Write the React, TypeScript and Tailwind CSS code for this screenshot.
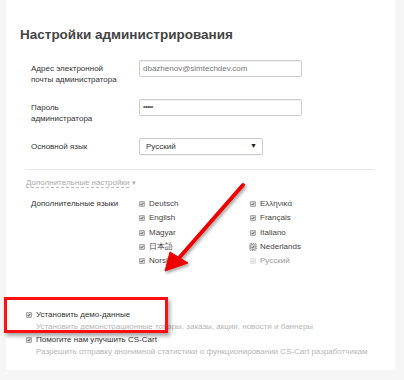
import type { ReactNode } from 'react'

const font = { fontFamily: '"Liberation Sans", Arial, sans-serif' }

const languages = [
  ['Deutsch', 'Ελληνικά'],
  ['English', 'Français'],
  ['Magyar', 'Italiano'],
  ['日本語', 'Nederlands'],
  ['Norsk', 'Русский'],
]

function Check({ disabled = false, focused = false }: { disabled?: boolean; focused?: boolean }) {
  return (
    <span
      className={`relative inline-flex w-[6px] h-[6px] shrink-0 items-center justify-center rounded-[1px] border ${
        disabled ? 'border-[#e2e2e2] bg-[#f3f3f3]' : 'border-[#aaa] bg-[#d4d4d4]'
      } ${focused ? 'outline outline-1 outline-dotted outline-[#888] outline-offset-0' : ''}`}
    >
      <svg viewBox="0 0 6 6" className="w-[6px] h-[6px]">
        <path d="M1 3.2 L2.4 4.6 L5 1.3" fill="none" stroke={disabled ? '#bbb' : '#333'} strokeWidth="1.1" />
      </svg>
    </span>
  )
}

function Row({ label, children, className }: { label: ReactNode; children: ReactNode; className: string }) {
  return (
    <div className={`flex items-start pl-[25px] ${className}`}>
      <div className="w-[108px] pt-[3px] text-[8px] leading-[11px] text-[#333]">{label}</div>
      {children}
    </div>
  )
}

export default function App() {
  return (
    <div className="relative w-[404px] h-[380px] bg-[#f6f6f6] overflow-hidden" style={font}>
      <div className="ml-[6px] w-[389px] h-[370px] bg-white">
        <h1 className="pl-[14px] pt-[26px] text-[13.5px] leading-[18px] font-bold text-[#444]">
          Настройки администрирования
        </h1>

        <Row className="mt-[16px] h-[39px]" label={<>Адрес электронной<br />почты администратора</>}>
          <div className="w-[163px] h-[17px] border border-[#ccc] rounded-[2px] shadow-[inset_0_1px_1px_rgba(0,0,0,0.06)] px-[3px] text-[8px] leading-[15px] text-[#777]">
            dbazhenov@simtechdev.com
          </div>
        </Row>

        <Row className="h-[39px]" label={<>Пароль<br />администратора</>}>
          <div className="w-[163px] h-[17px] border border-[#ccc] rounded-[2px] shadow-[inset_0_1px_1px_rgba(0,0,0,0.06)] px-[3px] text-[7px] leading-[14px] text-[#555] tracking-[-0.5px]">
            •••••
          </div>
        </Row>

        <div className="flex items-center pl-[25px] h-[17px]">
          <div className="w-[108px] text-[8px] leading-[11px] text-[#333]">Основной язык</div>
          <div className="flex items-center justify-between w-[124px] h-[17px] border border-[#ccc] rounded-[2px] bg-white pl-[6px] pr-[5px] shadow-[0_1px_1px_rgba(0,0,0,0.05)]">
            <span className="text-[8px] text-[#333]">Русский</span>
            <span className="text-[7px] text-[#222]">▼</span>
          </div>
        </div>

        <div className="mx-[20px] mt-[14px] h-px bg-[#e8e8e8]" />

        <div className="pl-[20px] mt-[7px] text-[8px] leading-[11px] text-[#aaa]">
          <span className="border-b border-dashed border-[#bbb]">Дополнительные настройки</span>
          <span className="ml-[3px] text-[7px]">▾</span>
        </div>

        <div className="flex pl-[25px] mt-[9px]">
          <div className="w-[108px] text-[8px] leading-[14.25px] text-[#333]">Дополнительные языки</div>
          <div className="grid grid-cols-[111px_111px]">
            {languages.map(([a, b]) => (
              <div key={a} className="contents">
                <div className="flex items-center gap-[4px] h-[14.25px] text-[8px] text-[#444]">
                  <Check />
                  <span>{a}</span>
                </div>
                <div
                  className={`flex items-center gap-[4px] h-[14.25px] text-[8px] ${
                    b === 'Русский' ? 'text-[#999]' : 'text-[#444]'
                  }`}
                >
                  <Check disabled={b === 'Русский'} focused={b === 'Nederlands'} />
                  <span>{b}</span>
                </div>
              </div>
            ))}
          </div>
        </div>

        <div className="pl-[20px] mt-[41px] text-[8px] leading-[12px]">
          <div className="flex items-center gap-[4px] text-[#333]">
            <Check />
            <span>Установить демо-данные</span>
          </div>
          <div className="pl-[10px] text-[#b5b5b5]">
            Установить демонстрационные товары, заказы, акции, новости и баннеры
          </div>
          <div className="flex items-center gap-[4px] mt-[1px] text-[#333]">
            <Check />
            <span>Помогите нам улучшить CS-Cart</span>
          </div>
          <div className="pl-[10px] text-[#b5b5b5]">
            Разрешить отправку анонимной статистики о функционировании CS-Cart разработчикам
          </div>
        </div>
      </div>

      {/* highlight box */}
      <div className="absolute left-[4px] top-[297px] w-[164px] h-[36px] border-[3px] border-[#ff1010] shadow-[2px_3px_4px_rgba(0,0,0,0.35)]" />

      {/* red arrow */}
      <svg className="absolute inset-0 pointer-events-none" width="404" height="380" viewBox="0 0 404 380">
        <defs>
          <filter id="sh" x="-20%" y="-20%" width="140%" height="140%">
            <feDropShadow dx="1.5" dy="2" stdDeviation="1.5" floodColor="#000" floodOpacity="0.35" />
          </filter>
        </defs>
        <g filter="url(#sh)" fill="#ee0000" stroke="#ee0000">
          <line x1="243" y1="185" x2="179" y2="258" strokeWidth="4" strokeLinecap="round" />
          <polygon points="165,271 170,252 188,263" strokeWidth="1" strokeLinejoin="round" />
        </g>
      </svg>
    </div>
  )
}
